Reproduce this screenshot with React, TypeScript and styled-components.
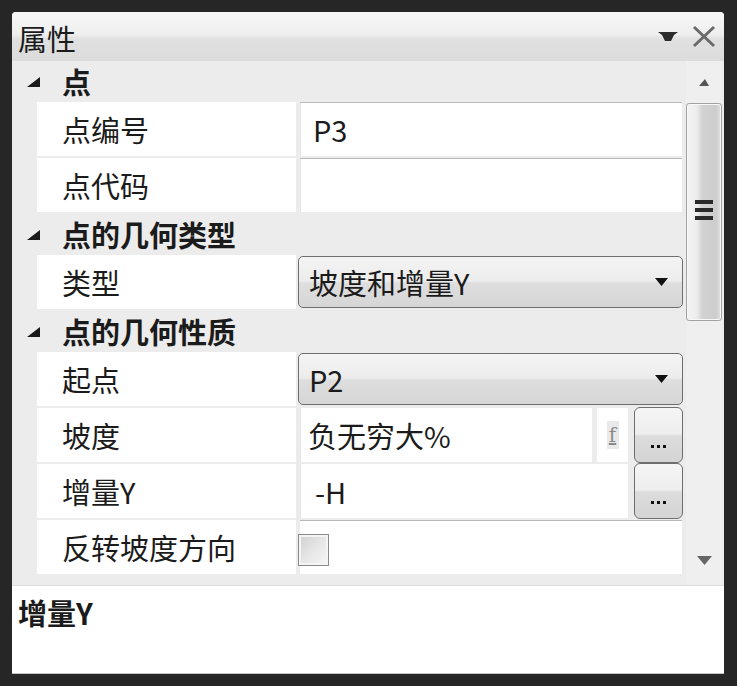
import React from "react";
import styled, { createGlobalStyle } from "styled-components";

const GlobalStyle = createGlobalStyle`
  html, body { margin: 0; padding: 0; background: #262626; }
  body { font-family: "Noto Sans CJK SC", "Noto Sans", sans-serif; color: #1b1b1b; }
  * { box-sizing: border-box; }
`;

const Frame = styled.div`
  width: 737px;
  height: 686px;
  padding: 12px 13px 12px 12px;
  background: #262626;
`;

const Panel = styled.div`
  width: 712px;
  height: 662px;
  display: flex;
  flex-direction: column;
  background: #ececec;
  border-radius: 4px 4px 0 0;
  overflow: hidden;
  border-bottom: 1px solid #c4c4c4;
`;

const TitleBar = styled.div`
  height: 49px;
  flex: none;
  display: flex;
  align-items: center;
  padding: 0 8px 0 6px;
  background: linear-gradient(#f6f6f6 0%, #efefef 45%, #e0e0e0 55%, #dcdcdc 100%);
`;

const Title = styled.div`
  flex: 1;
  font-size: 29px;
  line-height: 1;
  margin-top: 4px;
`;

const TitleIcons = styled.div`
  display: flex;
  align-items: center;
  gap: 14px;
`;

const Body = styled.div`
  flex: none;
  height: 524px;
  display: flex;
`;

const Grid = styled.div`
  flex: 1;
  display: flex;
  flex-direction: column;
  padding-right: 4px;
`;

const CategoryRow = styled.div`
  height: 41px;
  flex: none;
  display: flex;
  align-items: center;
  padding-left: 15px;
  font-weight: 700;
  font-size: 29px;
`;

const CategoryText = styled.span`
  margin-left: 22px;
  line-height: 1;
`;

const PropRow = styled.div`
  height: 54px;
  flex: none;
  margin-bottom: 2px;
  margin-left: 25px;
  display: flex;
  gap: 4px;
`;

const LabelCell = styled.div`
  width: 259px;
  flex: none;
  background: #ffffff;
  display: flex;
  align-items: center;
  padding-left: 25px;
  font-size: 29px;
  line-height: 1;
`;

const ValueCell = styled.div<{ $plain?: boolean }>`
  flex: 1;
  min-width: 0;
  display: flex;
  align-items: stretch;
  gap: 6px;
  background: ${(p) => (p.$plain ? "transparent" : "#ffffff")};
  border-top: ${(p) => (p.$plain ? "none" : "1px solid #b9b9b9")};
`;

const TextBox = styled.div<{ $pad?: number }>`
  flex: 1;
  min-width: 0;
  background: #ffffff;
  display: flex;
  align-items: center;
  padding-left: ${(p) => p.$pad ?? 12}px;
  font-size: 29px;
  line-height: 1;
  border-left: 1px solid #e6e6e6;
`;

const FormulaCell = styled.div`
  width: 31px;
  flex: none;
  background: #ffffff;
  display: flex;
  align-items: center;
  justify-content: center;
  margin-left: -1px;
`;

const FormulaGlyph = styled.span`
  display: inline-block;
  width: 12px;
  padding: 4px 0;
  background: #e9e9e9;
  color: #8a8a8a;
  font-family: "DejaVu Serif", serif;
  font-size: 20px;
  line-height: 1;
  text-align: center;
  text-decoration: underline;
`;

const EllipsisButton = styled.div`
  width: 49px;
  flex: none;
  margin: -1px -1px -1px 0;
  border: 1px solid #6f6f6f;
  border-radius: 6px;
  background: linear-gradient(#f5f5f5 0%, #eeeeee 48%, #dcdcdc 52%, #d4d4d4 100%);
  display: flex;
  align-items: flex-end;
  justify-content: center;
  padding-bottom: 14px;
  gap: 3px;
`;

const Dot = styled.span`
  width: 3px;
  height: 3px;
  background: #111;
`;

const Combo = styled.div`
  flex: 1;
  margin: 1px -1px 1px -2px;
  border: 1px solid #6e6e6e;
  border-radius: 5px;
  background: linear-gradient(#f4f4f4 0%, #ececec 48%, #dedede 52%, #d6d6d6 100%);
  display: flex;
  align-items: center;
  padding: 0 14px 0 10px;
  font-size: 29px;
  line-height: 1;
`;

const ComboText = styled.span`
  flex: 1;
`;

const CheckBox = styled.div`
  width: 31px;
  height: 32px;
  margin: 13px 0 0 -2px;
  border: 1px solid #8a8a8a;
  background: linear-gradient(135deg, #cfcfcf 0%, #e6e6e6 50%, #f6f6f6 100%);
  box-shadow: inset 0 0 0 2px #f4f4f4;
`;

const ScrollBar = styled.div`
  width: 36px;
  flex: none;
  margin-right: 2px;
  background: #efefef;
  display: flex;
  flex-direction: column;
  align-items: stretch;
`;

const ArrowBox = styled.div<{ $h: number }>`
  height: ${(p) => p.$h}px;
  flex: none;
  display: flex;
  align-items: center;
  justify-content: center;
`;

const Thumb = styled.div`
  height: 218px;
  flex: none;
  border: 1px solid #a3a3a3;
  border-radius: 3px;
  background: linear-gradient(90deg, #f4f4f4 0%, #ececec 30%, #d2d2d2 45%, #cdcdcd 85%, #e2e2e2 100%);
  box-shadow: inset 0 0 0 1px #f8f8f8;
  display: flex;
  flex-direction: column;
  align-items: center;
  justify-content: center;
  gap: 4px;
  padding-bottom: 4px;
`;

const GripLine = styled.span`
  width: 18px;
  height: 4px;
  background: #2a2a2a;
`;

const Track = styled.div`
  flex: 1;
`;

const Description = styled.div`
  flex: 1;
  background: #ffffff;
  border-top: 1px solid #dcdcdc;
  padding: 9px 6px;
  font-size: 29px;
  font-weight: 700;
  line-height: 1.2;
`;

const Expander = () => (
  <svg width="13" height="10" viewBox="0 0 13 10">
    <polygon points="13,0 13,10 0,10" fill="#1a1a1a" />
  </svg>
);

const ComboArrow = () => (
  <svg width="13" height="8" viewBox="0 0 13 8">
    <polygon points="0,0 13,0 6.5,8" fill="#111" />
  </svg>
);

const Dots = () => (
  <EllipsisButton>
    <Dot />
    <Dot />
    <Dot />
  </EllipsisButton>
);

export default function App() {
  return (
    <>
      <GlobalStyle />
      <Frame>
        <Panel>
          <TitleBar>
            <Title>属性</Title>
            <TitleIcons>
              <svg width="20" height="9" viewBox="0 0 20 9">
                <polygon points="0,0 20,0 16,3 13,9 7,9 4,3" fill="#2b2b2b" />
              </svg>
              <svg width="24" height="23" viewBox="0 0 24 23">
                <path d="M2 2 L22 21 M22 2 L2 21" stroke="#6a6a6a" strokeWidth="3" />
              </svg>
            </TitleIcons>
          </TitleBar>
          <Body>
            <Grid>
              <CategoryRow>
                <Expander />
                <CategoryText>点</CategoryText>
              </CategoryRow>
              <PropRow>
                <LabelCell>点编号</LabelCell>
                <ValueCell>
                  <TextBox>P3</TextBox>
                </ValueCell>
              </PropRow>
              <PropRow>
                <LabelCell>点代码</LabelCell>
                <ValueCell>
                  <TextBox />
                </ValueCell>
              </PropRow>
              <CategoryRow>
                <Expander />
                <CategoryText>点的几何类型</CategoryText>
              </CategoryRow>
              <PropRow>
                <LabelCell>类型</LabelCell>
                <ValueCell $plain>
                  <Combo>
                    <ComboText>坡度和增量Y</ComboText>
                    <ComboArrow />
                  </Combo>
                </ValueCell>
              </PropRow>
              <CategoryRow>
                <Expander />
                <CategoryText>点的几何性质</CategoryText>
              </CategoryRow>
              <PropRow>
                <LabelCell>起点</LabelCell>
                <ValueCell $plain>
                  <Combo>
                    <ComboText>P2</ComboText>
                    <ComboArrow />
                  </Combo>
                </ValueCell>
              </PropRow>
              <PropRow>
                <LabelCell>坡度</LabelCell>
                <ValueCell $plain>
                  <TextBox $pad={7}>负无穷大%</TextBox>
                  <FormulaCell>
                    <FormulaGlyph>f</FormulaGlyph>
                  </FormulaCell>
                  <Dots />
                </ValueCell>
              </PropRow>
              <PropRow>
                <LabelCell>增量Y</LabelCell>
                <ValueCell $plain>
                  <TextBox $pad={14}>-H</TextBox>
                  <Dots />
                </ValueCell>
              </PropRow>
              <PropRow>
                <LabelCell>反转坡度方向</LabelCell>
                <ValueCell>
                  <CheckBox />
                </ValueCell>
              </PropRow>
            </Grid>
            <ScrollBar>
              <ArrowBox $h={42}>
                <svg width="10" height="7" viewBox="0 0 10 7">
                  <polygon points="6,0 10,7 0,7" fill="#555" />
                </svg>
              </ArrowBox>
              <Thumb>
                <GripLine />
                <GripLine />
                <GripLine />
              </Thumb>
              <Track />
              <ArrowBox $h={50}>
                <svg width="15" height="9" viewBox="0 0 15 9">
                  <polygon points="0,0 15,0 7.5,9" fill="#666" />
                </svg>
              </ArrowBox>
            </ScrollBar>
          </Body>
          <Description>增量Y</Description>
        </Panel>
      </Frame>
    </>
  );
}
